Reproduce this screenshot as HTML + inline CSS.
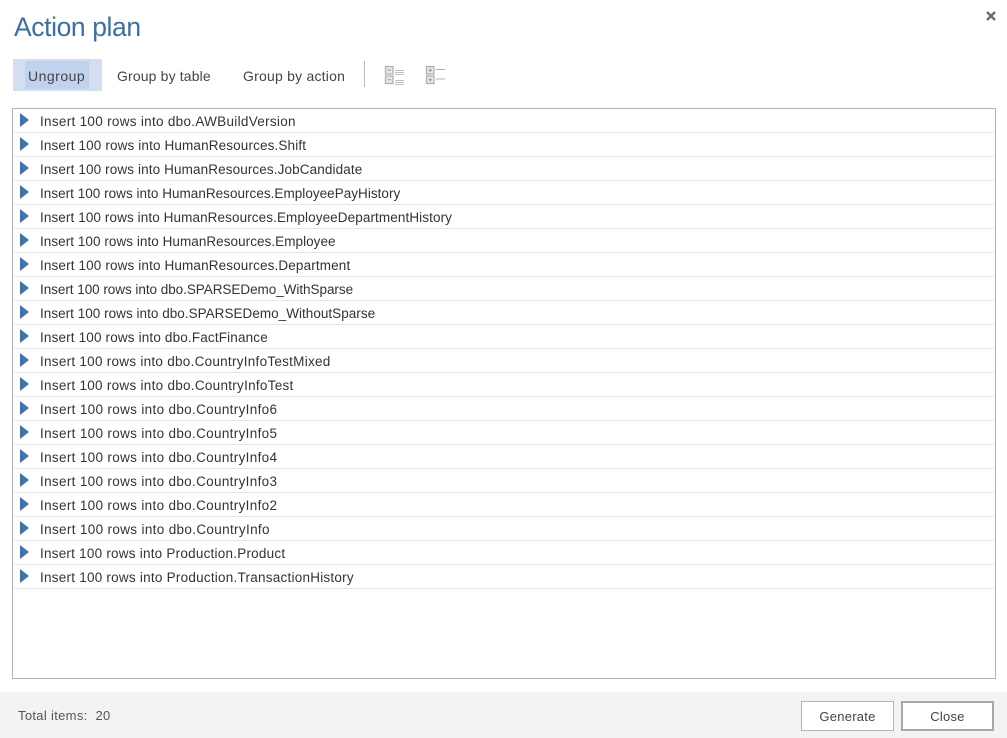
<!DOCTYPE html>
<html>
<head>
<meta charset="utf-8">
<style>
html,body{margin:0;padding:0;width:1007px;height:738px;background:#fff;overflow:hidden;font-family:"Liberation Sans",sans-serif;color:#444}
.abs{position:absolute;white-space:nowrap}
#title{left:14px;top:10px;font-size:26.5px;line-height:34px;color:#3a6ea8;letter-spacing:-.4px}
.tb{top:67px;font-size:14px;line-height:18px;color:#444}
#list{left:12px;top:108px;width:982px;height:569px;border:1px solid #b4b4b4;background:#fff;overflow:hidden}
.row{position:relative;height:23px;border-bottom:1px solid #e6e6e6;font-size:13.5px;line-height:26px;color:#333}
.row span{position:absolute;left:27px;top:0;white-space:nowrap}
.row svg{position:absolute;left:6px;top:4px}
#foot{left:0;top:692px;width:1007px;height:46px;background:#f3f3f3}
.btn{box-sizing:border-box;background:#fff;text-align:center;font-size:13px;color:#444;letter-spacing:.25px}
</style>
</head>
<body>
<div class="abs" id="title">Action plan</div>
<svg class="abs" style="left:985px;top:10px" width="12" height="12" viewBox="0 0 12 12"><path d="M2 2L10 10M10 2L2 10" stroke="#6e6e6e" stroke-width="2.4"/></svg>

<div class="abs" style="left:13px;top:59px;width:89px;height:32px;background:#d3dff1"></div>
<div class="abs" style="left:25px;top:61px;width:64px;height:28px;background:#bfd3ef"></div>
<div class="abs tb" style="left:28px;letter-spacing:.5px">Ungroup</div>
<div class="abs tb" style="left:117px;letter-spacing:.14px">Group by table</div>
<div class="abs tb" style="left:243px;letter-spacing:.22px">Group by action</div>
<div class="abs" style="left:364px;top:61px;width:1px;height:26px;background:#b8b8b8"></div>

<svg class="abs" style="left:384px;top:65px" width="22" height="22" viewBox="0 0 22 22" fill="none">
<rect x="1.5" y="1.5" width="7.5" height="7.5" stroke="#b4b4b4" stroke-width="1.3" fill="#e8e8e8"/><path d="M3.5 5.2H7" stroke="#999"/>
<rect x="1.5" y="11" width="7.5" height="7.5" stroke="#b4b4b4" stroke-width="1.3" fill="#e8e8e8"/><path d="M3.5 14.7H7" stroke="#999"/>
<path d="M11 5.5H20M11 7.5H20M11 9.5H20M11 15.5H20M11 17.5H20M11 19.5H20" stroke="#c0c0c0"/>
</svg>
<svg class="abs" style="left:425px;top:65px" width="22" height="22" viewBox="0 0 22 22" fill="none">
<rect x="1.5" y="1.5" width="7.5" height="7.5" stroke="#b0b0b0" stroke-width="1.3" fill="#e8e8e8"/><path d="M3.5 5.2H7M5.2 3.5V7" stroke="#999"/>
<rect x="1.5" y="11" width="7.5" height="7.5" stroke="#b0b0b0" stroke-width="1.3" fill="#e8e8e8"/><path d="M3.5 14.7H7M5.2 13V16.5" stroke="#999"/>
<path d="M11 4.5H20M11 14H20" stroke="#b0b0b0"/>
</svg>

<div class="abs" id="list">
<div class="row"><svg width="11" height="14"><path d="M1 0L10 7L1 14Z" fill="#3f72ad"/></svg><span style="letter-spacing:.3px">Insert 100 rows into dbo.AWBuildVersion</span></div>
<div class="row"><svg width="11" height="14"><path d="M1 0L10 7L1 14Z" fill="#3f72ad"/></svg><span style="letter-spacing:.14px">Insert 100 rows into HumanResources.Shift</span></div>
<div class="row"><svg width="11" height="14"><path d="M1 0L10 7L1 14Z" fill="#3f72ad"/></svg><span style="letter-spacing:.12px">Insert 100 rows into HumanResources.JobCandidate</span></div>
<div class="row"><svg width="11" height="14"><path d="M1 0L10 7L1 14Z" fill="#3f72ad"/></svg><span style="letter-spacing:.03px">Insert 100 rows into HumanResources.EmployeePayHistory</span></div>
<div class="row"><svg width="11" height="14"><path d="M1 0L10 7L1 14Z" fill="#3f72ad"/></svg><span style="letter-spacing:.1px">Insert 100 rows into HumanResources.EmployeeDepartmentHistory</span></div>
<div class="row"><svg width="11" height="14"><path d="M1 0L10 7L1 14Z" fill="#3f72ad"/></svg><span style="letter-spacing:.05px">Insert 100 rows into HumanResources.Employee</span></div>
<div class="row"><svg width="11" height="14"><path d="M1 0L10 7L1 14Z" fill="#3f72ad"/></svg><span style="letter-spacing:.14px">Insert 100 rows into HumanResources.Department</span></div>
<div class="row"><svg width="11" height="14"><path d="M1 0L10 7L1 14Z" fill="#3f72ad"/></svg><span style="letter-spacing:-.04px">Insert 100 rows into dbo.SPARSEDemo_WithSparse</span></div>
<div class="row"><svg width="11" height="14"><path d="M1 0L10 7L1 14Z" fill="#3f72ad"/></svg><span style="letter-spacing:.03px">Insert 100 rows into dbo.SPARSEDemo_WithoutSparse</span></div>
<div class="row"><svg width="11" height="14"><path d="M1 0L10 7L1 14Z" fill="#3f72ad"/></svg><span style="letter-spacing:.16px">Insert 100 rows into dbo.FactFinance</span></div>
<div class="row"><svg width="11" height="14"><path d="M1 0L10 7L1 14Z" fill="#3f72ad"/></svg><span style="letter-spacing:.27px">Insert 100 rows into dbo.CountryInfoTestMixed</span></div>
<div class="row"><svg width="11" height="14"><path d="M1 0L10 7L1 14Z" fill="#3f72ad"/></svg><span style="letter-spacing:.28px">Insert 100 rows into dbo.CountryInfoTest</span></div>
<div class="row"><svg width="11" height="14"><path d="M1 0L10 7L1 14Z" fill="#3f72ad"/></svg><span style="letter-spacing:.33px">Insert 100 rows into dbo.CountryInfo6</span></div>
<div class="row"><svg width="11" height="14"><path d="M1 0L10 7L1 14Z" fill="#3f72ad"/></svg><span style="letter-spacing:.33px">Insert 100 rows into dbo.CountryInfo5</span></div>
<div class="row"><svg width="11" height="14"><path d="M1 0L10 7L1 14Z" fill="#3f72ad"/></svg><span style="letter-spacing:.33px">Insert 100 rows into dbo.CountryInfo4</span></div>
<div class="row"><svg width="11" height="14"><path d="M1 0L10 7L1 14Z" fill="#3f72ad"/></svg><span style="letter-spacing:.33px">Insert 100 rows into dbo.CountryInfo3</span></div>
<div class="row"><svg width="11" height="14"><path d="M1 0L10 7L1 14Z" fill="#3f72ad"/></svg><span style="letter-spacing:.33px">Insert 100 rows into dbo.CountryInfo2</span></div>
<div class="row"><svg width="11" height="14"><path d="M1 0L10 7L1 14Z" fill="#3f72ad"/></svg><span style="letter-spacing:.34px">Insert 100 rows into dbo.CountryInfo</span></div>
<div class="row"><svg width="11" height="14"><path d="M1 0L10 7L1 14Z" fill="#3f72ad"/></svg><span style="letter-spacing:.23px">Insert 100 rows into Production.Product</span></div>
<div class="row"><svg width="11" height="14"><path d="M1 0L10 7L1 14Z" fill="#3f72ad"/></svg><span style="letter-spacing:.24px">Insert 100 rows into Production.TransactionHistory</span></div>
</div>

<div class="abs" id="foot"></div>
<div class="abs" style="left:18px;top:708px;font-size:13px;line-height:16px;color:#555;letter-spacing:.32px">Total items:&nbsp;&nbsp;20</div>
<div class="abs btn" style="left:801px;top:701px;width:93px;height:30px;border:1px solid #b4b4b4;line-height:29px">Generate</div>
<div class="abs btn" style="left:901px;top:701px;width:93px;height:30px;border:2px solid #a8a8a8;line-height:27px">Close</div>
</body>
</html>
